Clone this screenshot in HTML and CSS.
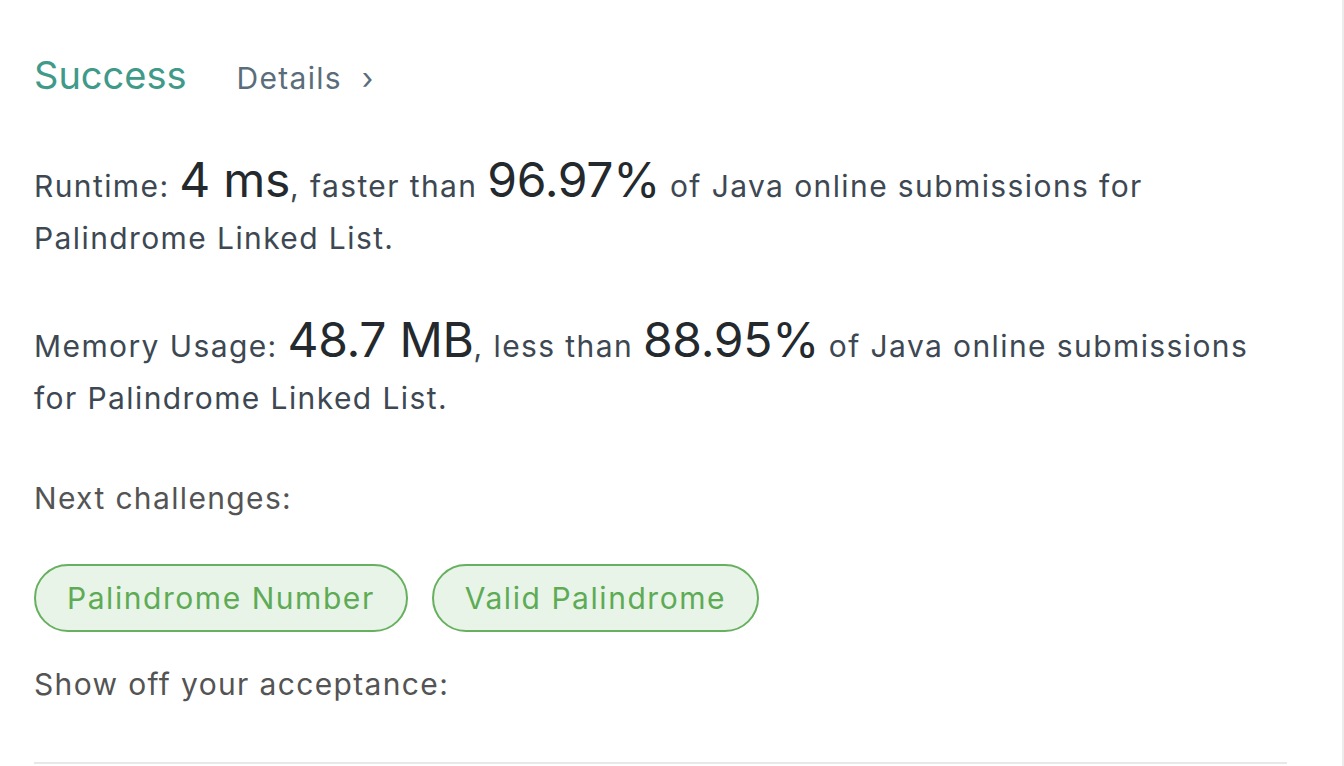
FILE: index.html
```html
<!DOCTYPE html>
<html>
<head>
<meta charset="utf-8">
<link rel="stylesheet" href="styles.css">
</head>
<body>
<div class="page">
  <div class="panel">
    <div class="header">
      <span class="status">Success</span>
      <a class="details">Details <span class="chev">›</span></a>
    </div>
    <p class="stat">Runtime: <span class="big">4 ms</span>, faster than <span class="big">96.97%</span> of Java online submissions for<br>Palindrome Linked List.</p>
    <p class="stat">Memory Usage: <span class="big">48.7 MB</span>, less than <span class="big">88.95%</span> of Java online submissions<br>for Palindrome Linked List.</p>
    <p class="label">Next challenges:</p>
    <div class="pills">
      <a class="pill">Palindrome Number</a>
      <a class="pill">Valid Palindrome</a>
    </div>
    <p class="label share">Show off your acceptance:</p>
    <div class="rule"></div>
  </div>
</div>
</body>
</html>
```

FILE: styles.css
```css
html, body {
  margin: 0;
  padding: 0;
  background: #ffffff;
}
.page {
  width: 1344px;
  height: 766px;
  box-sizing: border-box;
  border-right: 2px solid #ececec;
  overflow: hidden;
  font-family: Inter, "Liberation Sans", Arial, sans-serif;
}
.panel {
  padding: 52px 55px 0 34px;
}
.header {
  display: flex;
  align-items: baseline;
  gap: 50px;
  height: 48px;
}
.status {
  font-size: 38px;
  color: #3f9a89;
}
.details {
  font-size: 30px;
  letter-spacing: 1.3px;
  color: #5b6d7a;
}
.chev {
  margin-left: 10px;
}
.stat {
  margin: 60px 0 0 0;
  font-size: 30px;
  line-height: 52px;
  letter-spacing: 1.4px;
  color: #3d4853;
}
.stat + .stat {
  margin-top: 56px;
}
.big {
  display: inline-block;
  line-height: 40px;
  font-size: 48px;
  letter-spacing: -0.3px;
  color: #24292e;
}
.label {
  margin: 56px 0 0 0;
  font-size: 30px;
  line-height: 36px;
  letter-spacing: 1.35px;
  color: #545454;
}
.pills {
  display: flex;
  gap: 24px;
  margin-top: 48px;
}
.pill {
  box-sizing: border-box;
  height: 68px;
  padding: 0 31px;
  display: flex;
  align-items: center;
  border: 2px solid #67b05f;
  border-radius: 34px;
  background: #e8f4e7;
  color: #5eab56;
  font-size: 30px;
  letter-spacing: 1.55px;
}
.label.share {
  margin-top: 34px;
}
.rule {
  margin-top: 60px;
  height: 2px;
  background: #e8e8e8;
}
```
